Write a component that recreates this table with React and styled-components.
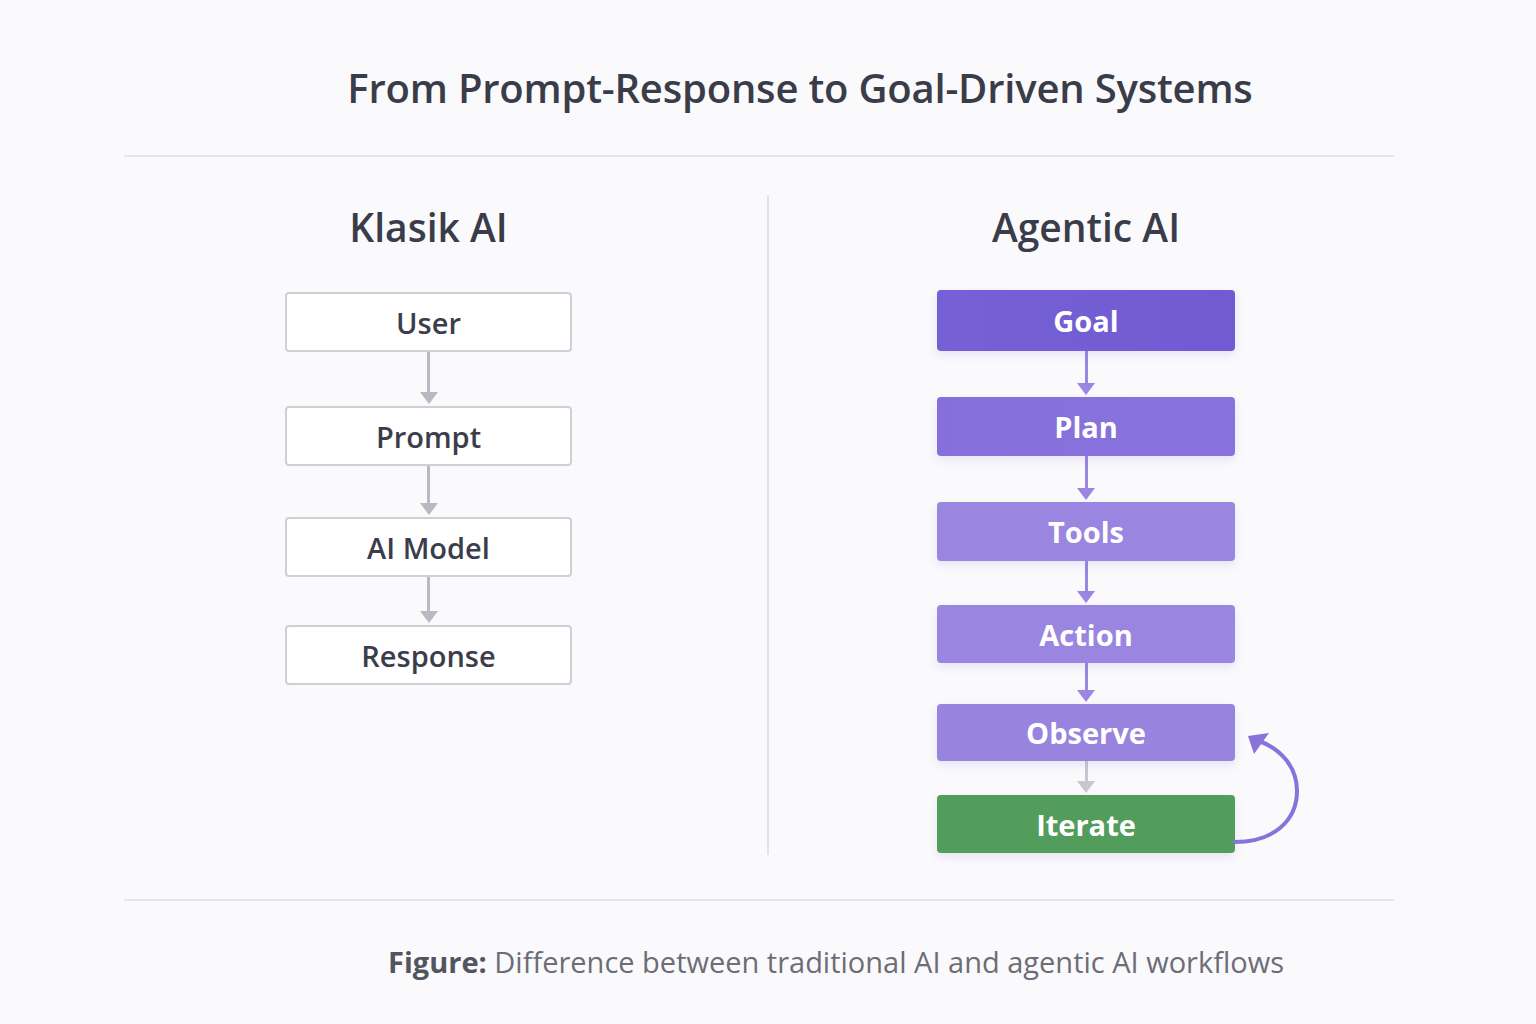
import React from 'react'
import styled, { createGlobalStyle } from 'styled-components'

const GlobalStyle = createGlobalStyle`
  html, body {
    margin: 0;
    padding: 0;
    background: #fafafc;
  }
  body {
    font-family: 'Open Sans', 'Noto Sans', sans-serif;
    color: #3b3e4a;
  }
`

const Page = styled.div`
  width: 1270px;
  margin-left: 124px;
  padding-top: 64px;
  height: 1024px;
  box-sizing: border-box;
`

const Title = styled.h1`
  margin: 0;
  padding-left: 82px;
  text-align: center;
  font-size: 40px;
  line-height: 48px;
  font-weight: 600;
  color: #3a3d49;
  letter-spacing: -0.2px;
`

const Rule = styled.hr`
  margin: ${({ top }) => top}px 0 0;
  border: 0;
  height: 2px;
  background: #e6e6ea;
`

const Columns = styled.div`
  display: grid;
  grid-template-columns: 643px 2px 1fr;
  margin-top: 38px;
  height: 660px;
`

const Column = styled.section`
  display: flex;
  flex-direction: column;
  align-items: center;
  padding-top: 10px;
  padding-left: ${({ left }) => left || 0}px;
  padding-right: ${({ right }) => right || 0}px;
`

const Divider = styled.div`
  background: #e2e2e6;
  width: 2px;
`

const Heading = styled.h2`
  margin: 0;
  font-size: 39px;
  line-height: 44px;
  font-weight: 600;
  color: #3a3d49;
`

const Flow = styled.div`
  display: flex;
  flex-direction: column;
  align-items: center;
  margin-top: ${({ top }) => top}px;
`

const Box = styled.div`
  width: ${({ w }) => w}px;
  height: ${({ h }) => h}px;
  box-sizing: border-box;
  display: flex;
  align-items: center;
  justify-content: center;
  border-radius: 4px;
  font-size: 29px;
  font-weight: 600;
`

const PlainBox = styled(Box)`
  background: #fff;
  border: 2px solid #cfcfd5;
  color: #3b3e4a;
`

const StepBox = styled(Box)`
  position: relative;
  background: ${({ bg }) => bg};
  color: #fff;
  font-weight: 700;
  box-shadow: 0 4px 10px rgba(110, 90, 200, 0.14);
`

const Connector = styled.div`
  height: ${({ h }) => h}px;
  display: flex;
  flex-direction: column;
  align-items: center;
`

const Shaft = styled.div`
  flex: 1;
  width: 3px;
  background: ${({ color }) => color};
`

const Head = styled.div`
  width: 0;
  height: 0;
  border-left: 9px solid transparent;
  border-right: 9px solid transparent;
  border-top: 12px solid ${({ color }) => color};
  margin-bottom: 2px;
`

const LoopArrow = styled.svg`
  position: absolute;
  left: 100%;
  top: -66px;
  width: 72px;
  height: 122px;
  overflow: visible;
`

const Caption = styled.p`
  margin: 43px 0 0;
  padding-left: 154px;
  text-align: center;
  font-size: 29px;
  line-height: 36px;
  color: #6c6d77;

  b {
    color: #52545e;
    font-weight: 700;
  }
`

const Arrow = ({ h, color }) => (
  <Connector h={h}>
    <Shaft color={color} />
    <Head color={color} />
  </Connector>
)

const classic = [
  { label: 'User', gap: 54 },
  { label: 'Prompt', gap: 51 },
  { label: 'AI Model', gap: 48 },
  { label: 'Response' }
]

const agentic = [
  { label: 'Goal', h: 61, bg: 'linear-gradient(90deg, #7560d6, #705bd2)', gap: 46, arrow: '#9b86e0' },
  { label: 'Plan', h: 59, bg: 'linear-gradient(90deg, #846fdc, #8873de)', gap: 46, arrow: '#9b86e0' },
  { label: 'Tools', h: 59, bg: '#9a85e0', gap: 44, arrow: '#9b86e0' },
  { label: 'Action', h: 58, bg: '#9a85e0', gap: 41, arrow: '#9b86e0' },
  { label: 'Observe', h: 57, bg: '#9884df', gap: 34, arrow: '#c7c7d1' },
  { label: 'Iterate', h: 58, bg: '#529c5c', loop: true }
]

export default function App() {
  return (
    <>
      <GlobalStyle />
      <Page>
        <Title>From Prompt-Response to Goal-Driven Systems</Title>
        <Rule top={43} />
        <Columns>
          <Column right={34}>
            <Heading>Klasik AI</Heading>
            <Flow top={43}>
              {classic.map(step => (
                <React.Fragment key={step.label}>
                  <PlainBox w={287} h={60}>{step.label}</PlainBox>
                  {step.gap && <Arrow h={step.gap} color="#b9b9c1" />}
                </React.Fragment>
              ))}
            </Flow>
          </Column>
          <Divider />
          <Column left={9}>
            <Heading>Agentic AI</Heading>
            <Flow top={41}>
              {agentic.map(step => (
                <React.Fragment key={step.label}>
                  <StepBox w={298} h={step.h} bg={step.bg}>
                    {step.label}
                    {step.loop && (
                      <LoopArrow viewBox="0 0 72 122">
                        <path
                          d="M0 113 C 38 113, 62 92, 62 62 C 62 38, 46 20, 24 12"
                          fill="none"
                          stroke="#8873da"
                          strokeWidth="4"
                          strokeLinecap="round"
                        />
                        <polygon points="13,7 34,4 19,25" fill="#8873da" />
                      </LoopArrow>
                    )}
                  </StepBox>
                  {step.gap && <Arrow h={step.gap} color={step.arrow} />}
                </React.Fragment>
              ))}
            </Flow>
          </Column>
        </Columns>
        <Rule top={44} />
        <Caption>
          <b>Figure:</b> Difference between traditional AI and agentic AI workflows
        </Caption>
      </Page>
    </>
  )
}
